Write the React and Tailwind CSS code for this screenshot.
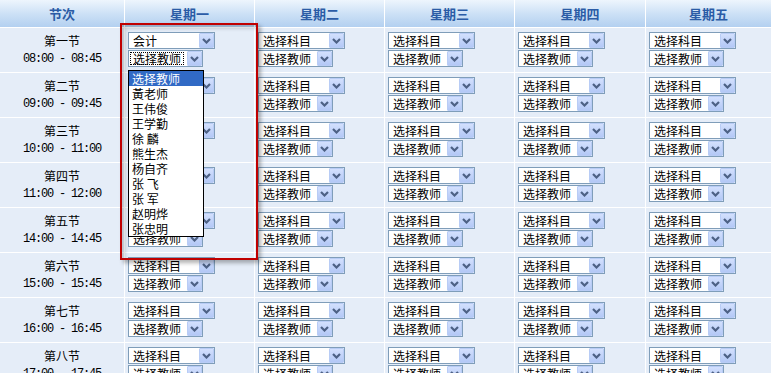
import React from "react";

const days = ["星期一", "星期二", "星期三", "星期四", "星期五"];
const periods = [
    ["第一节", "08:00 - 08:45"],
    ["第二节", "09:00 - 09:45"],
    ["第三节", "10:00 - 11:00"],
    ["第四节", "11:00 - 12:00"],
    ["第五节", "14:00 - 14:45"],
    ["第六节", "15:00 - 15:45"],
    ["第七节", "16:00 - 16:45"],
    ["第八节", "17:00 - 17:45"],
];
const teachers = [
    "选择教师",
    "黃老师",
    "王伟俊",
    "王学勤",
    "徐 麟",
    "熊生杰",
    "杨自齐",
    "张 飞",
    "张 军",
    "赵明烨",
    "张忠明",
];
const colW = ["w-[130px]", "w-[130px]", "w-[130px]", "w-[131px]", "w-[125px]"];

function Arrow() {
    return (
        <span className="flex items-center justify-center w-[15px] h-[15px] bg-gradient-to-b from-[#d3e0fd] to-[#b3c8f6] border border-[#b8ccf5] rounded-[1px] shrink-0">
            <svg width="9" height="6" viewBox="0 0 9 6">
                <path d="M1 1 L4.5 4.5 L8 1" fill="none" stroke="#4d6185" strokeWidth="2.2" />
            </svg>
        </span>
    );
}

function Select({ label, wide, focus }) {
    return (
        <div
            className={
                "flex items-center h-[17px] bg-white border border-[#7f9db9] " +
                (wide ? "w-[87px]" : "w-[75px]")
            }
        >
            <span className="flex-1 flex items-center h-full pl-[1px]">
                <span
                    className={
                        "px-[2px] h-[13px] flex items-center text-[12px] leading-none text-black " +
                        (focus ? "border border-dotted border-black" : "border border-transparent")
                    }
                >
                    {label}
                </span>
            </span>
            <Arrow />
        </div>
    );
}

export default function App() {
    return (
        <div className="relative w-[771px] h-[373px] overflow-hidden bg-[#e5edf8] font-['Noto_Sans_CJK_SC','Noto_Sans',sans-serif]">
            {/* header */}
            <div className="flex h-[28px] border-b border-white">
                <div className="w-[125px] border-r border-white flex items-center justify-center bg-gradient-to-b from-[#eef5fd] via-[#cde1f6] to-[#b3d0f0] text-[13px] font-bold text-[#2b5ca6]">
                    节次
                </div>
                {days.map((d, i) => (
                    <div
                        key={d}
                        className={
                            colW[i] +
                            " border-r border-white last:border-r-0 flex items-center justify-center bg-gradient-to-b from-[#eef5fd] via-[#cde1f6] to-[#b3d0f0] text-[13px] font-bold text-[#2b5ca6]"
                        }
                    >
                        {d}
                    </div>
                ))}
            </div>

            {/* rows */}
            {periods.map(([name, time], r) => (
                <div key={name} className="flex h-[45px] border-b border-white">
                    <div className="w-[125px] border-r border-white flex flex-col items-center pt-[4px] text-black">
                        <div className="h-[18px] flex items-center text-[12px]">{name}</div>
                        <div className="h-[18px] flex items-center text-[12px] tracking-[-1.2px] font-['Liberation_Mono',monospace]">
                            {time}
                        </div>
                    </div>
                    {days.map((d, i) => (
                        <div
                            key={d}
                            className={colW[i] + " border-r border-white last:border-r-0 flex flex-col gap-[1px] pl-[3px] pt-[4px]"}
                        >
                            <Select label={r === 0 && i === 0 ? "会计" : "选择科目"} wide />
                            <Select label="选择教师" focus={r === 0 && i === 0} />
                        </div>
                    ))}
                </div>
            ))}

            {/* open dropdown list */}
            <div className="absolute left-[128px] top-[70px] w-[76px] border border-black bg-white">
                {teachers.map((t, i) => (
                    <div
                        key={t}
                        className={
                            "h-[15px] flex items-center pl-[3px] text-[12px] leading-none " +
                            (i === 0 ? "bg-[#316ac5] text-white" : "text-black")
                        }
                    >
                        {t}
                    </div>
                ))}
            </div>

            {/* annotation box */}
            <div className="absolute left-[120px] top-[23px] w-[138px] h-[237px] border-2 border-[#c00000] shadow-[3px_3px_4px_rgba(0,0,0,0.3),inset_3px_3px_4px_rgba(0,0,0,0.2)]" />
        </div>
    );
}
